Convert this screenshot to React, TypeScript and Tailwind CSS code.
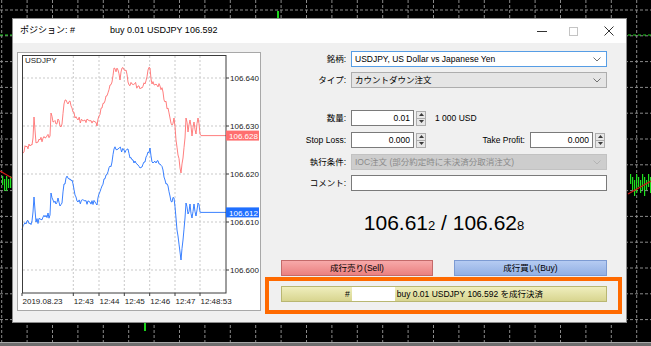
import React from "react";

type Pt = [number, number];

// deterministic jitter so the tick line looks like the screenshot every run
function tickPath(pts: Pt[], seed: number, amp: number) {
  let s = seed;
  const rnd = () => {
    s = (s * 9301 + 49297) % 233280;
    return s / 233280;
  };
  let d = "";
  for (let i = 0; i < pts.length - 1; i++) {
    const [x0, y0] = pts[i];
    const [x1, y1] = pts[i + 1];
    const flat = y0 === y1 && x1 - x0 > 10;
    const n = flat ? 1 : Math.max(1, Math.round((x1 - x0) / 1.1));
    for (let j = 0; j < n; j++) {
      const t = j / n;
      const x = x0 + (x1 - x0) * t;
      const y = y0 + (y1 - y0) * t + (j === 0 || flat ? 0 : (rnd() - 0.5) * amp);
      d += (d ? "L" : "M") + x.toFixed(1) + " " + y.toFixed(1);
    }
  }
  const last = pts[pts.length - 1];
  return d + "L" + last[0] + " " + last[1];
}

const askPts: Pt[] = [
  [22, 152], [26, 147], [30, 146], [32, 145], [33, 138], [34, 117], [35, 130], [36, 143],
  [40, 140], [45, 138], [50, 136], [51, 113], [53, 122], [56, 124], [58, 119], [60, 126],
  [62, 124], [64, 104], [66, 100], [68, 104], [70, 101], [72, 108], [75, 118], [78, 120],
  [85, 120], [90, 121], [95, 122], [97, 126], [99, 116], [102, 108], [106, 96], [110, 85],
  [112, 82], [114, 68], [118, 70], [120, 80], [122, 68], [126, 70], [128, 82], [132, 84],
  [138, 86], [142, 88], [145, 84], [148, 70], [150, 68], [152, 84], [156, 84], [160, 86],
  [163, 92], [165, 102], [168, 108], [170, 118], [172, 125], [174, 118], [176, 140],
  [178, 155], [180, 168], [181, 173], [183, 158], [185, 138], [186, 118], [188, 132],
  [190, 120], [192, 136], [194, 122], [196, 134], [198, 118], [200, 134], [201, 135.6],
  [226, 135.6],
];

const bidPts: Pt[] = [
  [22, 230], [26, 224], [30, 223], [32, 221], [33, 212], [34, 197], [35, 210], [36, 222],
  [40, 219], [45, 217], [50, 215], [51, 193], [53, 200], [56, 204], [58, 198], [60, 206],
  [62, 203], [64, 184], [66, 178], [68, 178], [72, 180], [75, 195], [78, 202], [85, 201],
  [90, 202], [95, 202], [97, 205], [99, 194], [102, 186], [106, 175], [110, 166],
  [112, 162], [114, 149], [118, 149], [124, 150], [128, 149], [130, 158], [134, 163],
  [138, 165], [142, 167], [145, 162], [148, 152], [150, 148], [152, 162], [156, 163],
  [160, 164], [163, 170], [165, 180], [168, 186], [170, 196], [172, 202], [174, 198],
  [176, 218], [178, 236], [180, 252], [181, 260], [183, 240], [185, 218], [186, 203],
  [188, 214], [190, 204], [192, 218], [194, 204], [196, 216], [198, 203], [200, 212],
  [201, 212.4], [226, 212.4],
];

const priceTicks = [
  { y: 78, label: "106.640" },
  { y: 126, label: "106.630" },
  { y: 174, label: "106.620" },
  { y: 222, label: "106.610" },
  { y: 270, label: "106.600" },
];

const timeTicks = [
  { x: 22, label: "2019.08.23" },
  { x: 73.3, label: "12:43" },
  { x: 99, label: "12:44" },
  { x: 124.3, label: "12:45" },
  { x: 149.7, label: "12:46" },
  { x: 175, label: "12:47" },
  { x: 200, label: "12:48:53" },
];

function TerminalBackdrop() {
  const vx = Array.from({ length: 26 }, (_, k) => 1.7 + 25.4 * k);
  const hy = Array.from({ length: 14 }, (_, k) => 10 + 25.8 * k);
  return (
    <svg className="absolute inset-0" width="651" height="346" viewBox="0 0 651 346">
      <rect width="651" height="346" fill="#000" />
      {vx.map((x) => (
        <line key={"v" + x} x1={x} y1="0" x2={x} y2="342" stroke="#8a8a8a" strokeWidth="1" strokeDasharray="3 2" />
      ))}
      {hy.map((y) => (
        <line key={"h" + y} x1="0" y1={y} x2="651" y2={y} stroke="#8a8a8a" strokeWidth="1" strokeDasharray="3 2" />
      ))}
      <line x1="0" y1="35" x2="12" y2="35" stroke="#1fcf1f" strokeDasharray="3 2" />
      <line x1="628" y1="35" x2="651" y2="35" stroke="#1fcf1f" strokeDasharray="3 2" />
      <rect x="277" y="11" width="2" height="8" fill="#19d219" />
      <rect x="144" y="323" width="2" height="8" fill="#19d219" />
      {[2, 4, 6, 8, 10].map((x, i) => (
        <rect key={"l" + x} x={x} y={176 + (i % 2) * 3} width="1.2" height={9 + (i % 3) * 3} fill="#1fe01f" />
      ))}
      <line x1="0" y1="171" x2="12" y2="178" stroke="#d01818" strokeWidth="1.2" />
      {[630, 632, 634, 636, 638, 640, 642, 644, 646, 648, 650].map((x, i) => (
        <rect key={"r" + x} x={x} y={174 + (i % 3) * 3} width="1.2" height={10 + (i % 4) * 3} fill="#1fe01f" />
      ))}
      <line x1="628" y1="194" x2="651" y2="181" stroke="#d01818" strokeWidth="1.2" />
      <rect x="0" y="342" width="651" height="4" fill="#6e6e6e" />
      <rect x="0" y="342" width="651" height="1" fill="#a8a8a8" />
    </svg>
  );
}

function PriceChart() {
  return (
    <svg width="242" height="257" viewBox="18 53 242 257">
      <rect x="18" y="53" width="242" height="257" fill="#fff" />
      {timeTicks.slice(1).map((t) => (
        <line key={t.label} x1={t.x} y1="56" x2={t.x} y2="293" stroke="#c9c9c9" strokeDasharray="2 2" />
      ))}
      {priceTicks.map((p) => (
        <line key={p.label} x1="23" y1={p.y} x2="226" y2={p.y} stroke="#c9c9c9" strokeDasharray="2 2" />
      ))}
      <path d={tickPath(askPts, 17, 6)} fill="none" stroke="#ff7070" strokeWidth="0.9" />
      <path d={tickPath(bidPts, 71, 6)} fill="none" stroke="#2573ff" strokeWidth="0.9" />
      <rect x="22.5" y="55.5" width="203.5" height="237.5" fill="none" stroke="#3c3c3c" />
      <text x="25" y="63" fontSize="8" fill="#222">USDJPY</text>
      {priceTicks.map((p) => (
        <g key={"t" + p.label}>
          <line x1="226" y1={p.y} x2="229" y2={p.y} stroke="#3c3c3c" />
          <text x="230" y={p.y + 3} fontSize="8" fill="#222">{p.label}</text>
        </g>
      ))}
      {timeTicks.map((t) => (
        <g key={"x" + t.label}>
          <line x1={t.x} y1="293" x2={t.x} y2="296" stroke="#3c3c3c" />
          <text x={t.x + 0.5} y="304" fontSize="8" fill="#222">{t.label}</text>
        </g>
      ))}
      <rect x="226" y="130.6" width="33" height="10" fill="#ff6f6f" />
      <text x="229" y="138.8" fontSize="8" fill="#fff">106.628</text>
      <rect x="226" y="207.4" width="33" height="10" fill="#1f6fff" />
      <text x="229" y="215.6" fontSize="8" fill="#fff">106.612</text>
    </svg>
  );
}

function Chevron({ color }: { color: string }) {
  return (
    <svg width="8" height="5" viewBox="0 0 8 5" className="mr-[5px] shrink-0">
      <path d="M0.5 0.5 L4 4 L7.5 0.5" fill="none" stroke={color} strokeWidth="1" />
    </svg>
  );
}

function Combo({ value, tone }: { value: string; tone: "focus" | "plain" | "off" }) {
  const box =
    tone === "focus"
      ? "bg-white border-[#569de5] text-black"
      : tone === "plain"
        ? "bg-[#e5e5e5] border-[#adadad] text-black"
        : "bg-[#cdcdcd] border-[#c2c2c2] text-[#8a8a8a]";
  return (
    <div className={`w-[256px] h-[16px] border flex items-center justify-between pl-[3px] ${box}`}>
      <span className="whitespace-nowrap">{value}</span>
      <Chevron color={tone === "off" ? "#b4b4b4" : "#707070"} />
    </div>
  );
}

function Spin() {
  return (
    <div className="ml-[2px] w-[10px] h-[15px] border border-[#adadad] bg-[#e7e7e7] flex flex-col">
      <div className="flex-1 flex items-center justify-center border-b border-[#adadad]">
        <svg width="5" height="3" viewBox="0 0 5 3">
          <path d="M0 3 L2.5 0 L5 3Z" fill="#3a3a3a" />
        </svg>
      </div>
      <div className="flex-1 flex items-center justify-center">
        <svg width="5" height="3" viewBox="0 0 5 3">
          <path d="M0 0 L2.5 3 L5 0Z" fill="#3a3a3a" />
        </svg>
      </div>
    </div>
  );
}

function NumBox({ value }: { value: string }) {
  return (
    <div className="flex items-center">
      <div className="w-[63px] h-[16px] border border-[#7a7a7a] bg-white flex items-center justify-end pr-[3px]">
        {value}
      </div>
      <Spin />
    </div>
  );
}

function Row({ label, className, children }: { label: string; className: string; children: React.ReactNode }) {
  return (
    <div className={`flex items-center h-[16px] ${className}`}>
      <div className="w-[85px] text-right whitespace-nowrap">{label}</div>
      <div className="ml-[5px] flex items-center">{children}</div>
    </div>
  );
}

export default function App() {
  return (
    <div className="relative w-[651px] h-[346px] overflow-hidden bg-black font-[family-name:'Liberation_Sans','Noto_Sans_CJK_JP',sans-serif]">
      <TerminalBackdrop />

      <div className="absolute left-[12px] top-[18px] w-[615px] h-[305px] border border-[#8c8c8c] bg-[#f0f0f0] flex flex-col">
        <div className="h-[24px] bg-white flex items-center text-[9px] text-black">
          <span className="ml-[7px] w-[90px]">ポジション: #</span>
          <span>buy 0.01 USDJPY 106.592</span>
          <div className="ml-auto flex items-center h-full">
            <div className="w-[10px] h-px bg-[#333]" />
            <div className="ml-[22px] w-[9px] h-[9px] border border-[#c4c4c4]" />
            <svg width="10" height="10" viewBox="0 0 10 10" className="ml-[26px] mr-[12px]">
              <path d="M0.5 0.5 L9.5 9.5 M9.5 0.5 L0.5 9.5" stroke="#333" strokeWidth="1" />
            </svg>
          </div>
        </div>

        <div className="flex pl-[4px] pt-[8px] text-[8.5px] text-black">
          <div className="mt-[1px] w-[244px] h-[259px] border border-[#a8a8a8] bg-white">
            <PriceChart />
          </div>

          <div className="w-[365px] flex flex-col">
            <Row label="銘柄:" className="">
              <Combo value="USDJPY, US Dollar vs Japanese Yen" tone="focus" />
            </Row>
            <Row label="タイプ:" className="mt-[5px]">
              <Combo value="カウントダウン注文" tone="plain" />
            </Row>
            <Row label="数量:" className="mt-[22px]">
              <NumBox value="0.01" />
              <span className="ml-[9px]">1 000 USD</span>
            </Row>
            <Row label="Stop Loss:" className="mt-[6px]">
              <NumBox value="0.000" />
              <span className="w-[99px] text-right">Take Profit:</span>
              <div className="ml-[5px]">
                <NumBox value="0.000" />
              </div>
            </Row>
            <Row label="執行条件:" className="mt-[6px]">
              <Combo value="IOC注文 (部分約定時に未決済分取消注文)" tone="off" />
            </Row>
            <Row label="コメント:" className="mt-[5px]">
              <div className="w-[256px] h-[16px] border border-[#7a7a7a] bg-white" />
            </Row>

            <div className="mt-[20px] ml-[20px] w-[326px] text-center text-[21px] leading-[24px] text-black">
              106.61<span className="text-[13px]">2</span> / 106.62<span className="text-[13px]">8</span>
            </div>

            <div className="mt-[22px] ml-[20px] w-[326px] flex justify-between">
              <button className="w-[152px] h-[16px] border border-[#c46a6a] bg-gradient-to-b from-[#f7a9a9] to-[#ea8080] text-[8.5px] leading-none text-black">
                成行売り(Sell)
              </button>
              <button className="w-[153px] h-[16px] border border-[#7d9bd3] bg-gradient-to-b from-[#b5cbf2] to-[#93b0e4] text-[8.5px] leading-none text-black">
                成行買い(Buy)
              </button>
            </div>

            <div className="mt-px ml-[4px] w-[357px] border-4 border-[#ff6a00] pl-[12px] pt-[5px] pb-[8px]">
              <div className="w-[326px] h-[16px] border border-[#b9b772] bg-gradient-to-b from-[#efeebd] to-[#d8d58f] flex items-center justify-center">
                <span>#</span>
                <span className="ml-[2px] w-[43px] h-[14px] bg-white" />
                <span className="ml-[2px]">buy 0.01 USDJPY 106.592 を成行決済</span>
              </div>
            </div>
          </div>
        </div>
      </div>
    </div>
  );
}
